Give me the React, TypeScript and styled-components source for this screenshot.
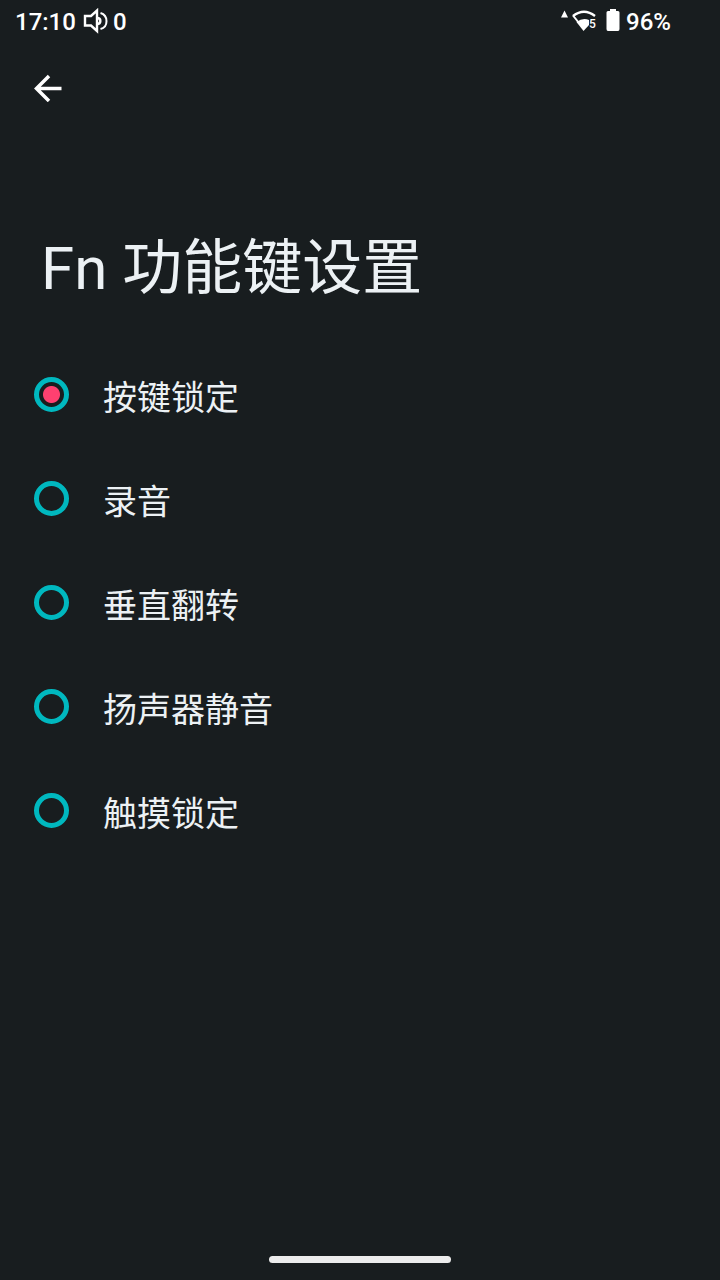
import React, { useState } from "react";
import styled, { createGlobalStyle } from "styled-components";

const GlobalStyle = createGlobalStyle`
  * { box-sizing: border-box; }
  html, body { margin: 0; background: #181d1f; }
  body { font-family: Roboto, "Noto Sans CJK SC", sans-serif; color: #ecf1f4; }
`;

const Screen = styled.div`
  display: flex;
  flex-direction: column;
  min-height: 100vh;
  background: #181d1f;
`;

const StatusBar = styled.header`
  display: flex;
  justify-content: space-between;
  align-items: center;
  height: 44px;
  padding: 0 49px 0 15px;
  font: 500 24px/44px Roboto, sans-serif;
  color: #fff;
`;

const StatusGroup = styled.div<{ $gap: number }>`
  display: flex;
  align-items: center;
  gap: ${(p) => p.$gap}px;
`;

const Icon = styled.svg`
  display: block;
  flex: none;
`;

const Toolbar = styled.nav`
  display: flex;
  padding: 16px 20px;
`;

const BackButton = styled.button`
  display: flex;
  align-items: center;
  justify-content: center;
  width: 56px;
  height: 56px;
  padding: 0;
  border: 0;
  border-radius: 50%;
  background: none;
  color: #fff;
  cursor: pointer;
`;

const Main = styled.main`
  flex: 1;
  padding-top: 93px;
`;

const Title = styled.h1`
  margin: 0;
  padding: 0 41px;
  font-size: 60px;
  line-height: 88px;
  font-weight: 400;
`;

const Options = styled.fieldset`
  margin: 0;
  padding: 29px 0 0;
  border: 0;
  min-width: 0;
`;

const Option = styled.label`
  display: flex;
  align-items: center;
  gap: 34px;
  height: 104px;
  padding: 0 34px;
  font-size: 34px;
  line-height: 48px;
  cursor: pointer;
`;

const OptionText = styled.span`
  padding-top: 8px;
`;

const Radio = styled.input`
  appearance: none;
  flex: none;
  width: 35px;
  height: 35px;
  margin: 0;
  border: 5px solid #00b8bf;
  border-radius: 50%;
  &:checked {
    background: radial-gradient(circle, #ff4070 8px, transparent 9px);
  }
`;

const NavigationBar = styled.footer`
  display: flex;
  justify-content: center;
  padding-bottom: 17px;
`;

const HomeHandle = styled.div`
  width: 182px;
  height: 7px;
  border-radius: 4px;
  background: #ececec;
`;

const options = ["按键锁定", "录音", "垂直翻转", "扬声器静音", "触摸锁定"];

function VolumeIcon() {
  return (
    <Icon width="26" height="28" viewBox="0 0 26 28" fill="none" stroke="currentColor" strokeWidth="2.400">
      <path d="M2 8H8L14 2.500V23L8 17.500H2Z" />
      <path d="M14 10C18.500 10 18.500 16 14 16" />
      <path d="M17.500 5C25.500 7.500 25.500 19 17.500 21" strokeWidth="2" />
    </Icon>
  );
}

function WifiIcon() {
  return (
    <Icon width="36" height="28" viewBox="0 0 36 28" fill="currentColor">
      <path d="M0 9.500 3.500 2.500 7 9.500Z" />
      <path d="M12 8Q23 -.5 34 8" fill="none" stroke="currentColor" strokeWidth="2.400" />
      <path d="M12 7.500 18 15" fill="none" stroke="currentColor" strokeWidth="2" />
      <path d="M15.500 14Q22 9 28 12V17L22.500 23Z" />
      <text x="28" y="20" fontSize="12" fontWeight="500">5</text>
    </Icon>
  );
}

function BatteryIcon() {
  return (
    <Icon width="14" height="28" viewBox="0 0 14 28" fill="currentColor">
      <path d="M4 1H10V3H12Q13.500 3 13.500 4.500V21Q13.500 23 12 23H2Q.5 23 .5 21V4.500Q.5 3 2 3H4Z" />
    </Icon>
  );
}

export default function App() {
  const [selected, setSelected] = useState(options[0]);
  return (
    <Screen>
      <GlobalStyle />
      <StatusBar>
        <StatusGroup $gap={7}>
          <span>17:10</span>
          <StatusGroup $gap={4}>
            <VolumeIcon />
            <span>0</span>
          </StatusGroup>
        </StatusGroup>
        <StatusGroup $gap={6}>
          <StatusGroup $gap={9}>
            <WifiIcon />
            <BatteryIcon />
          </StatusGroup>
          <span>96%</span>
        </StatusGroup>
      </StatusBar>
      <Toolbar>
        <BackButton type="button" aria-label="返回">
          <Icon width="28" height="28" viewBox="0 0 28 28" fill="none" stroke="currentColor" strokeWidth="3.500">
            <path d="M15 2 2.500 14.500 15 27M2.500 14.500H27.500" />
          </Icon>
        </BackButton>
      </Toolbar>
      <Main>
        <Title id="page-title">Fn 功能键设置</Title>
        <Options aria-labelledby="page-title">
          {options.map((name) => (
            <Option key={name}>
              <Radio
                type="radio"
                name="fn-key"
                value={name}
                checked={selected === name}
                onChange={() => setSelected(name)}
              />
              <OptionText>{name}</OptionText>
            </Option>
          ))}
        </Options>
      </Main>
      <NavigationBar>
        <HomeHandle />
      </NavigationBar>
    </Screen>
  );
}
